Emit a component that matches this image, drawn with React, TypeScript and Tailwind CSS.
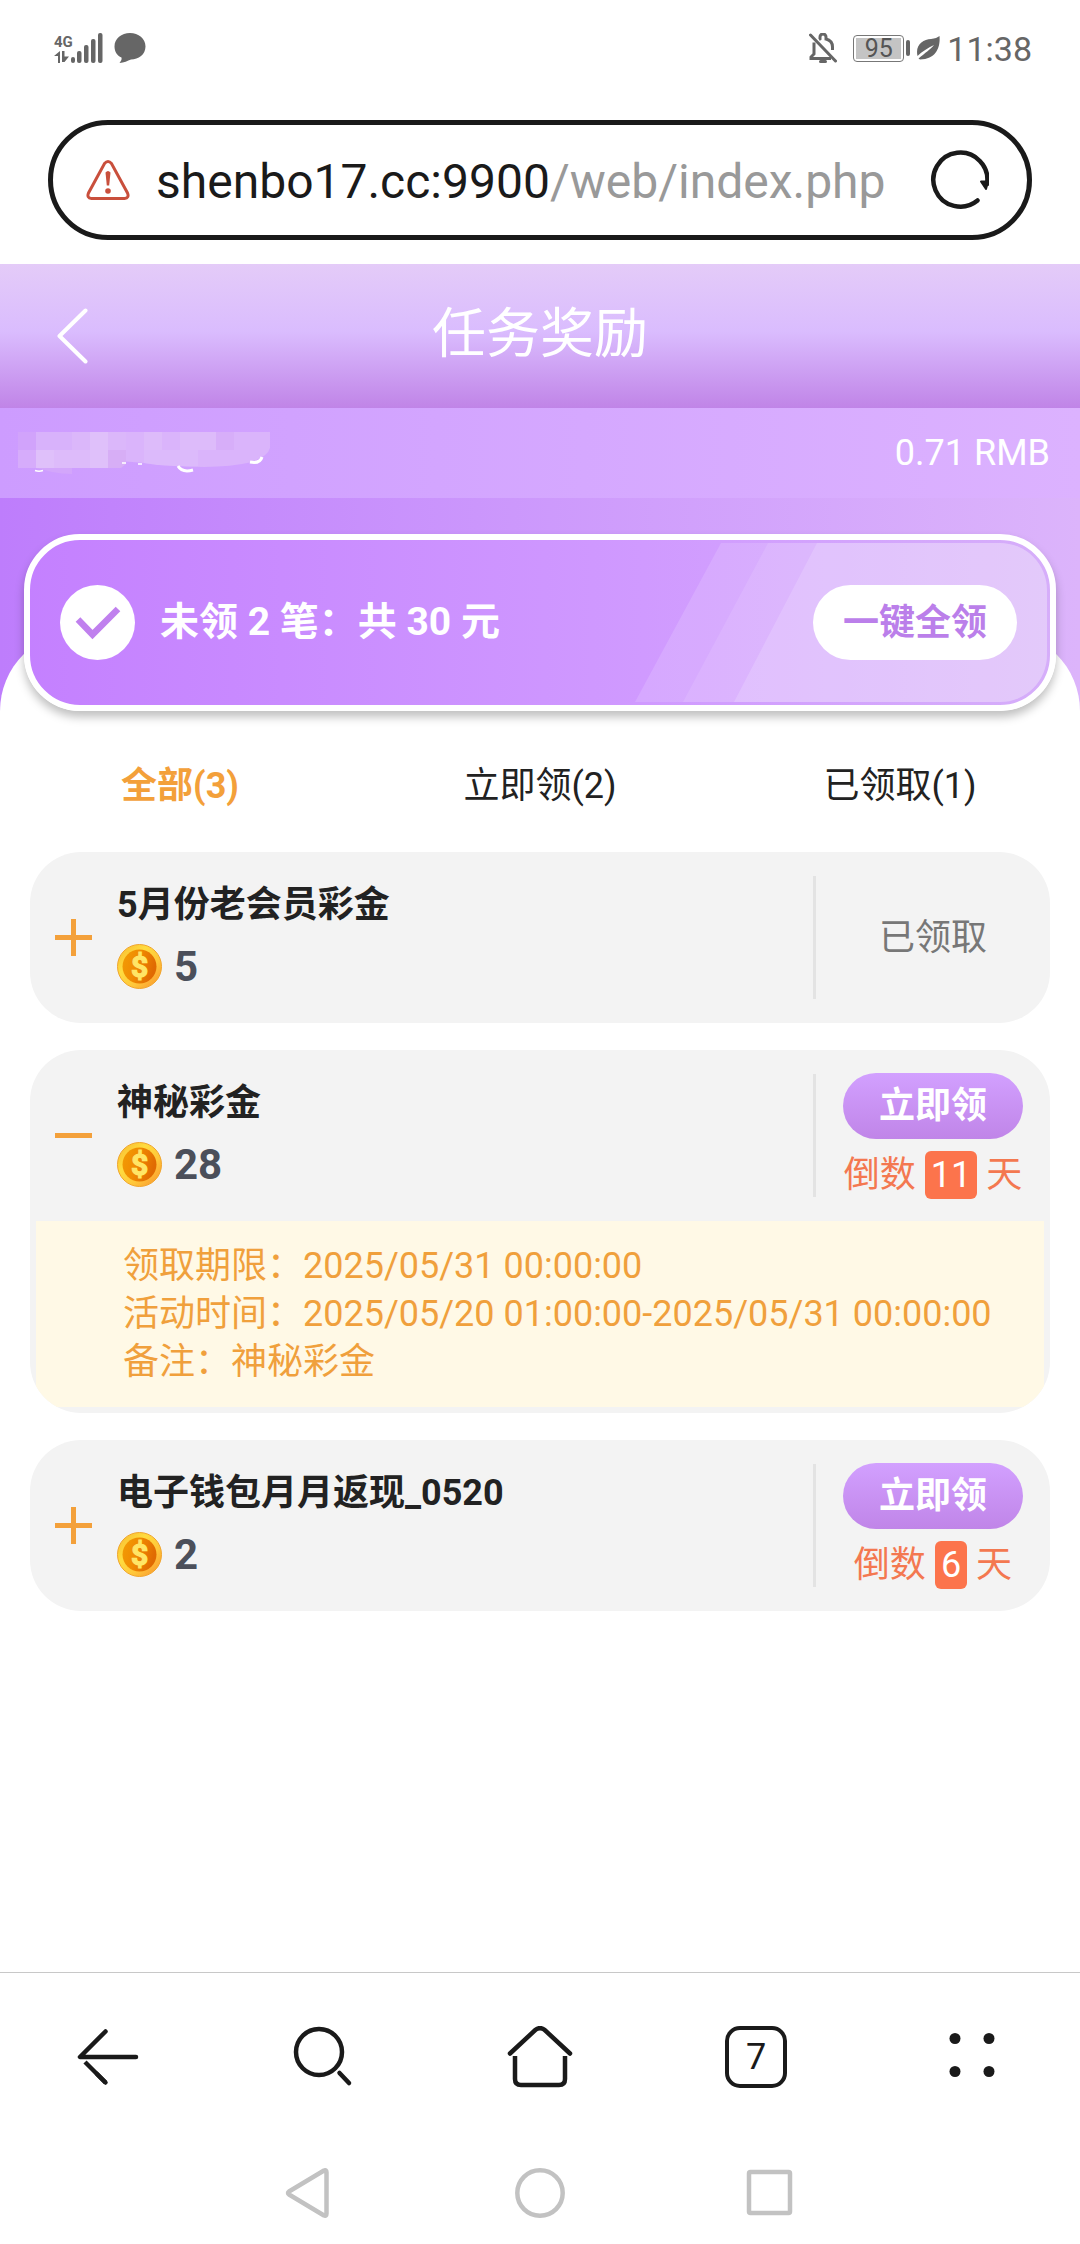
// src/App.tsx
import { useState } from "react";

const tabs = [
  { key: "all", label: "全部(3)" },
  { key: "open", label: "立即领(2)" },
  { key: "done", label: "已领取(1)" },
];

const rewards = [
  { id: 1, title: "5月份老会员彩金", amount: 5, claimed: true, days: 0, details: [] },
  {
    id: 2,
    title: "神秘彩金",
    amount: 28,
    claimed: false,
    days: 11,
    details: [
      "领取期限：2025/05/31 00:00:00",
      "活动时间：2025/05/20 01:00:00-2025/05/31 00:00:00",
      "备注：神秘彩金",
    ],
  },
  { id: 3, title: "电子钱包月月返现_0520", amount: 2, claimed: false, days: 6, details: [] },
];

function StatusBar() {
  return (
    <div className="flex h-24 items-center justify-between pl-[54px] pr-12 text-[#666]">
      <div className="flex items-center gap-[11px]">
        <div className="flex items-end">
          <div className="flex w-[17px] flex-col">
            <span className="text-[15px] leading-[18px] font-bold">4G</span>
            <svg width="16" height="12" viewBox="0 0 16 12" fill="currentColor">
              <path d="M4 12V5H0L6 0v12zM8 0h2.500v5.500H15L10.500 11H8z" />
            </svg>
          </div>
          <svg width="32" height="30" viewBox="0 0 32 30" fill="currentColor">
            <rect x="0" y="24" width="4" height="6" rx="2" />
            <rect x="6" y="18" width="4.500" height="12" rx="2" />
            <rect x="13" y="12" width="4.500" height="18" rx="2" />
            <rect x="20" y="6" width="4.500" height="24" rx="2" />
            <rect x="27" y="0" width="4.500" height="30" rx="2" />
          </svg>
        </div>
        <svg width="32" height="30" viewBox="0 0 32 30" fill="currentColor">
          <path d="M16 0C24.500 0 31.500 5.500 31.500 13.500S24.500 26.500 17 26.500C13.500 27.500 10 30 5.500 30 7 28 8 26.500 7.500 24.500 3 22.500.5 18.500.5 13.500.5 5.500 7.500 0 16 0z" />
        </svg>
      </div>

      <div className="flex items-center">
        <svg className="mr-4" width="28" height="30" viewBox="0 0 28 30" fill="none" stroke="currentColor" strokeWidth="3">
          <path d="M1.500 2l25 26" strokeLinecap="round" />
          <path d="M11 6V4a3 3 0 0 1 6 0v2c4 1 6.500 4 6.500 8v3M10 6.500l2-1M5 9.500V21l-3 3v1.500h20" />
          <path d="M11.500 28.500h5" strokeLinecap="round" />
        </svg>
        <div className="flex h-[27px] w-[51px] items-center justify-center rounded-[4px] border border-[#777] p-[2px]">
          <span className="flex h-full w-full items-center justify-center bg-[#c4c4c4] text-[25px] leading-[21px] text-[#555]">
            95
          </span>
        </div>
        <span className="mx-[2px] h-4 w-1 rounded-sm bg-current" />
        <svg className="ml-[5px] mr-[7px]" width="23" height="24" viewBox="0 0 23 24" fill="currentColor">
          <path d="M22.500 0C23.500 10 20 23.500 3 23.500L1.500 22.500C8 17 14 13 17 9 11 12 5 15.500.5 20-2 9 6 3.500 14 3c4-.5 6.500-1.500 8.500-3z" />
        </svg>
        <span className="pt-[2px] text-[34px] leading-[48px]">11:38</span>
      </div>
    </div>
  );
}

function AddressBar() {
  return (
    <div className="mx-12 my-6 flex h-[120px] items-center rounded-full border-[5px] border-[#1a1a1a] pl-[33px] pr-[38px]">
      <svg className="shrink-0" width="44" height="40" viewBox="0 0 44 40" fill="none" stroke="#c94f3c" strokeWidth="3">
        <path d="M18.500 3.500Q22 -.5 25.500 3.500L41.500 33Q43.500 38 38.500 38.500H5.500Q.5 38 2.500 33Z" />
        <path d="M19.500 12.500q2.500-3 5 0L23.200 25.500h-2.400z" fill="#c94f3c" stroke="none" />
        <circle cx="22" cy="31" r="2.800" fill="#c94f3c" stroke="none" />
      </svg>
      <button className="flex-1 pt-1 pl-[26px] text-left text-[48px] leading-[60px] text-[#1a1a1a]">
        shenbo17.cc:9900<span className="text-[#999]">/web/index.php</span>
      </button>
      <button aria-label="刷新">
        <svg width="60" height="60" viewBox="0 0 60 60" fill="none" stroke="#1a1a1a" strokeWidth="4.500" strokeLinecap="round">
          <path d="M48.500 50.500A27 27 0 1 1 58 34" />
          <path d="M52 31.500h7l-2 7.500z" fill="#1a1a1a" strokeWidth="2" strokeLinejoin="round" />
        </svg>
      </button>
    </div>
  );
}

// masked account name, 18px blocks with the tails of the letters showing below
function MaskedName() {
  return (
    <svg width="254" height="42" viewBox="0 0 254 42">
      <path d="M90 0H252V16Q250 24 234 30 200 38 150 33L90 28z" fill="#dab4fb" />
      <path d="M0 0h18v18H0z" fill="#d1a3fb" />
      <path d="M0 18h18v18H0z" fill="#d6acfb" />
      <path d="M18 0h36v18H18z" fill="#d8b2fb" />
      <path d="M54 0h18v18H54zM90 0h18v18H90z" fill="#dbb7fa" />
      <path d="M72 0h18v36H72zM18 18h18v18H18z" fill="#dfc0fa" />
      <path d="M36 18h36v18H36zM126 0h18v18h-18zM162 0h36v18h-36z" fill="#ddbbfa" />
      <path d="M90 18h18v14l-5 4H90z" fill="#d7aef6" />
      <path d="M126 18h54v16q-30 1-54-3z" fill="#dcbafb" />
      <path d="M198 0h18v18h-18z" fill="#d7aef9" />
      <path d="M18 36h36v6q-10 0-20-2z" fill="#d3a6fb" />
      <path d="M17 38.500q4 1.500 8 0M104 31h4M120 32h4" fill="none" stroke="#fff" strokeWidth="1.500" />
      <path d="M160 34q4 7 15 4M232 30q10 2 12-5" fill="none" stroke="#fff" strokeWidth="3" />
    </svg>
  );
}

function Coin() {
  return (
    <svg width="45" height="45" viewBox="0 0 45 45">
      <defs>
        <linearGradient id="rim" x1="0" y1="0" x2="1" y2="1">
          <stop offset="0" stopColor="#f7b62e" />
          <stop offset="0.350" stopColor="#ffdc3f" />
          <stop offset="0.650" stopColor="#ffc63a" />
          <stop offset="1" stopColor="#f98f2a" />
        </linearGradient>
        <linearGradient id="face" x1="0" y1="0" x2="1" y2="0.300">
          <stop offset="0" stopColor="#f29d05" />
          <stop offset="0.500" stopColor="#f08a02" />
          <stop offset="1" stopColor="#e06a02" />
        </linearGradient>
      </defs>
      <circle cx="22.500" cy="22.500" r="22" fill="url(#rim)" stroke="#f0a42c" />
      <circle cx="22.500" cy="22.500" r="17" fill="url(#face)" />
      <text x="22.500" y="33" textAnchor="middle" fontSize="30" fontWeight="700" fill="#ffe566" stroke="#ffe566" strokeWidth="1.200">
        $
      </text>
    </svg>
  );
}

function RewardCard({ item, open, toggle }) {
  return (
    <div className="overflow-hidden rounded-[51px] bg-[#f3f3f3]">
      <div className="flex h-[171px] py-6">
        <button
          onClick={toggle}
          aria-label={open ? "收起" : "展开"}
          className="flex w-[87px] shrink-0 items-center justify-center"
        >
          <svg width="37" height="37" viewBox="0 0 37 37" stroke="#f3a03a" strokeWidth="5">
            <path d="M0 18.500h37" />
            {!open && <path d="M18.500 0v37" />}
          </svg>
        </button>

        <div className="flex-1">
          <h3 className="text-[36px] leading-[58px] font-bold text-[#222]">{item.title}</h3>
          <p className="flex h-16 items-center gap-3 text-[42px] font-bold text-[#4b4f5a]">
            <Coin />
            {item.amount}
          </p>
        </div>

        <div className="flex w-[237px] shrink-0 flex-col items-center justify-center gap-3 border-l-[3px] border-[#e3e3e3]">
          {item.claimed ? (
            <span className="text-[36px] leading-[48px] text-[#777]">已领取</span>
          ) : (
            <>
              <button className="h-[66px] w-[180px] shrink-0 rounded-full bg-linear-to-b from-[#d2a0ff] to-[#c085e8] text-[36px] leading-[60px] font-bold text-white">
                立即领
              </button>
              <p className="flex gap-[9px] text-[36px] leading-[48px] text-[#f37850]">
                倒数
                <span className="rounded-md bg-[#fc744c] px-[6px] text-white">{item.days}</span>天
              </p>
            </>
          )}
        </div>
      </div>

      {open && (
        <div className="px-[6px] pb-[6px]">
          <div className="bg-[#fff9e6] py-[21px] pl-[87px] text-[36px] leading-[48px] text-[#f0a03c]">
            {item.details.map((line) => (
              <p key={line}>{line}</p>
            ))}
          </div>
        </div>
      )}
    </div>
  );
}

function BrowserBar() {
  return (
    <nav className="grid h-[169px] grid-cols-5 place-items-center border-t border-[#c8c8c8] text-[#1a1a1a]">
      <button aria-label="后退">
        <svg width="62" height="62" viewBox="0 0 62 62" fill="none" stroke="currentColor" strokeWidth="4.500" strokeLinecap="round">
          <path d="M28.500 5.500L3 31h56" strokeLinejoin="round" />
          <path d="M28.500 56.500L8 36" strokeLinecap="butt" />
          <path d="M28.500 56.500L20 48" />
        </svg>
      </button>
      <button aria-label="搜索">
        <svg width="62" height="62" viewBox="0 0 62 62" fill="none" stroke="currentColor" strokeWidth="4.500">
          <circle cx="26" cy="26" r="23" />
          <path d="M46.500 47l9.500 10" strokeLinecap="round" />
        </svg>
      </button>
      <button aria-label="主页">
        <svg width="66" height="62" viewBox="0 0 66 62" fill="none" stroke="currentColor" strokeWidth="4.500">
          <path d="M3 27.500L28.500 3.800Q33 .5 37.500 3.800L63 27.500" strokeLinecap="round" />
          <path d="M8 30V53Q8 59 14 59H52Q58 59 58 53V30" />
        </svg>
      </button>
      <button
        aria-label="标签页"
        className="h-[62px] w-[62px] rounded-[15px] border-4 border-current text-[36px] leading-[50px]"
      >
        7
      </button>
      <button aria-label="更多">
        <svg width="62" height="62" viewBox="0 0 62 62" fill="currentColor">
          <circle cx="14" cy="12.500" r="5.500" />
          <circle cx="48" cy="12.500" r="5.500" />
          <circle cx="14" cy="45.500" r="5.500" />
          <circle cx="48" cy="45.500" r="5.500" />
        </svg>
      </button>
    </nav>
  );
}

function SystemBar() {
  return (
    <nav className="flex h-[103px] items-center justify-center gap-[180px] text-[#c2c2c2]">
      <button aria-label="返回">
        <svg width="50" height="50" viewBox="0 0 50 50" fill="none" stroke="currentColor" strokeWidth="4.500" strokeLinejoin="round">
          <path d="M4 23.500L39 2.500Q41.500 1.500 41.500 4.500V45.500Q41.500 48.500 39 47.500L4 26.500Q2 25 4 23.500z" />
        </svg>
      </button>
      <button aria-label="桌面">
        <svg width="50" height="50" viewBox="0 0 50 50" fill="none" stroke="currentColor" strokeWidth="4.500">
          <circle cx="25" cy="25" r="22.700" />
        </svg>
      </button>
      <button aria-label="最近任务">
        <svg width="50" height="50" viewBox="0 0 50 50" fill="none" stroke="currentColor" strokeWidth="4.500">
          <rect x="4" y="4" width="41" height="41" rx="1.500" />
        </svg>
      </button>
    </nav>
  );
}

export default function App() {
  const [tab, setTab] = useState("all");
  const [openId, setOpenId] = useState(2);

  const list = rewards.filter((r) => tab === "all" || (tab === "done" ? r.claimed : !r.claimed));

  return (
    <div className="flex min-h-screen flex-col bg-white font-['Roboto','Noto_Sans_CJK_SC',sans-serif]">
      <StatusBar />
      <AddressBar />

      <header className="grid h-36 grid-cols-[144px_1fr_144px] items-center bg-linear-to-b from-[#e4cbf8] via-[#dabcfe] via-[47%] to-[#c084e7] text-white">
        <button aria-label="返回上一页" className="pl-14">
          <svg width="32" height="56" viewBox="0 0 32 56" fill="none" stroke="currentColor" strokeWidth="4" strokeLinecap="round" strokeLinejoin="round">
            <path d="M29.500 2.500L3.500 28l26 25.500" />
          </svg>
        </button>
        <h1 className="pb-[2px] text-center text-[54px] leading-[72px]">任务奖励</h1>
      </header>

      <div className="flex h-[90px] items-center justify-between bg-linear-to-r from-[#cd9cff] to-[#dcb2ff] pl-[18px] pr-[30px] text-white">
        <MaskedName />
        <span className="text-[36px] leading-[48px]">0.71 RMB</span>
      </div>

      <section className="relative bg-linear-to-r from-[#be7dfc] to-[#dcb4fb] px-6 pt-9">
        <div className="absolute inset-x-0 bottom-0 h-20 rounded-t-[80px] bg-white" />
        <div className="relative flex h-[177px] items-center overflow-hidden rounded-[56px] border-[6px] border-white bg-linear-to-r from-[#c480ff] via-[#d09aff] via-60% to-[#d6aefa] bg-origin-border pl-[30px] pr-[33px] shadow-[0_6px_10px_rgba(0,0,0,0.25)]">
          <div className="absolute inset-y-[3px] right-[3px] w-[412px] overflow-hidden rounded-r-[47px]">
            <svg width="412" height="159" viewBox="0 0 412 159" fill="#fff">
              <path d="M86 0H412V159H0z" opacity="0.140" />
              <path d="M133 0H412V159H48z" opacity="0.100" />
              <path d="M182 0H412V159H99z" opacity="0.160" />
            </svg>
          </div>
          <svg className="relative" width="75" height="75" viewBox="0 0 75 75">
            <circle cx="37.500" cy="37.500" r="37.500" fill="#fff" />
            <path d="M18 34.500L32.500 49.500 58 24" fill="none" stroke="#c080ee" strokeWidth="6.500" />
          </svg>
          <p className="relative flex-1 pb-[2px] pl-[25px] text-[39px] leading-[54px] font-bold text-white">
            未领 2 笔：共 30 元
          </p>
          <button className="relative h-[75px] w-[204px] rounded-full bg-white text-[36px] leading-[72px] font-bold text-[#bb7fea]">
            一键全领
          </button>
        </div>
      </section>

      <div className="grid grid-cols-3 pt-[27px] pb-[18px]">
        {tabs.map((t) => (
          <button
            key={t.key}
            onClick={() => setTab(t.key)}
            className={
              tab === t.key
                ? "h-24 text-[36px] font-bold text-[#f3a03a]"
                : "h-24 text-[36px] text-[#222]"
            }
          >
            {t.label}
          </button>
        ))}
      </div>

      <main className="flex flex-1 flex-col gap-[27px] px-[30px]">
        {list.map((item) => (
          <RewardCard
            key={item.id}
            item={item}
            open={openId === item.id}
            toggle={() => setOpenId(openId === item.id ? 0 : item.id)}
          />
        ))}
      </main>

      <BrowserBar />
      <SystemBar />
    </div>
  );
}
